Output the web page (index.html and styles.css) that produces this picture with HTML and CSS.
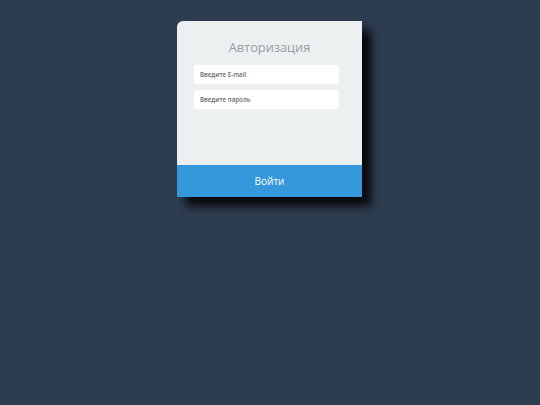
FILE: index.html
```html
<!DOCTYPE html>
<html lang="ru">
<head>
<meta charset="utf-8">
<link rel="stylesheet" href="styles.css">
</head>
<body>
<div class="card">
  <div class="body">
    <h1 class="title">Авторизация</h1>
    <input class="field" type="text" placeholder="Введите E-mail">
    <input class="field" type="password" placeholder="Введите пароль">
  </div>
  <button class="btn">Войти</button>
</div>
</body>
</html>
```
FILE: styles.css
```css
html, body {
  margin: 0;
  padding: 0;
  height: 100%;
}
body {
  background: #2e3c4f;
  font-family: "Open Sans", "Liberation Sans", sans-serif;
  display: flex;
  justify-content: center;
  align-items: flex-start;
}
.card {
  margin-top: 21px;
  margin-left: -1px;
  width: 185px;
  height: 176px;
  background: #ecf0f1;
  border-radius: 6px 0 0 0;
  box-shadow: 9px 9px 8px rgba(0, 0, 0, 0.85);
  display: flex;
  flex-direction: column;
  overflow: hidden;
}
.body {
  flex: 1;
  display: flex;
  flex-direction: column;
  align-items: center;
  padding-top: 17px;
  gap: 6px;
}
.title {
  margin: 0 0 3px 0;
  font-size: 12.8px;
  font-weight: 400;
  color: #95a0a3;
  line-height: 18px;
}
.field {
  box-sizing: border-box;
  width: 145px;
  height: 19px;
  margin-right: 6px;
  border: none;
  border-radius: 3px;
  background: #ffffff;
  padding: 0 6px;
  font-family: inherit;
  font-size: 6.2px;
  font-weight: 600;
  outline: none;
}
.field::placeholder {
  color: #6a6a6a;
}
.btn {
  height: 32px;
  border: none;
  background: #3498db;
  color: #ffffff;
  font-family: inherit;
  font-size: 10px;
  line-height: 30px;
  padding: 0;
  margin: 0;
}
```
